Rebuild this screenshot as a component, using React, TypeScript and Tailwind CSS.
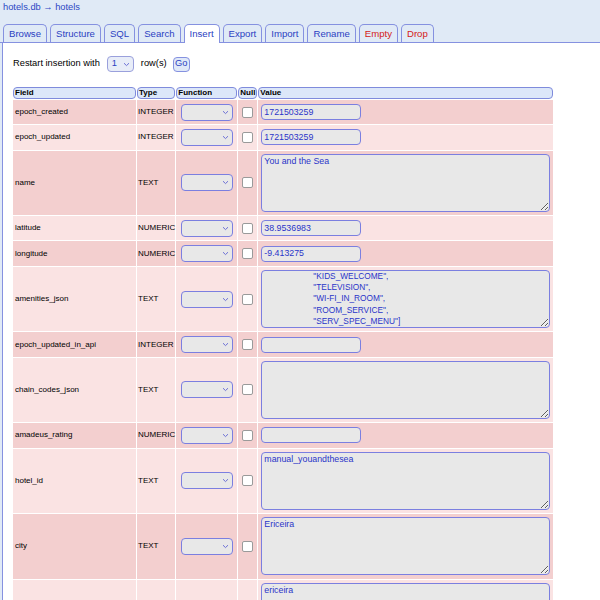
import React from "react";

type Row = { f: string; t: string; v: string; kind: "input" | "area"; indent?: boolean };

const rows: Row[] = [
  { f: "epoch_created", t: "INTEGER", v: "1721503259", kind: "input" },
  { f: "epoch_updated", t: "INTEGER", v: "1721503259", kind: "input" },
  { f: "name", t: "TEXT", v: "You and the Sea", kind: "area" },
  { f: "latitude", t: "NUMERIC", v: "38.9536983", kind: "input" },
  { f: "longitude", t: "NUMERIC", v: "-9.413275", kind: "input" },
  {
    f: "amenities_json",
    t: "TEXT",
    v: '"KIDS_WELCOME",\n"TELEVISION",\n"WI-FI_IN_ROOM",\n"ROOM_SERVICE",\n"SERV_SPEC_MENU"]',
    kind: "area",
    indent: true,
  },
  { f: "epoch_updated_in_api", t: "INTEGER", v: "", kind: "input" },
  { f: "chain_codes_json", t: "TEXT", v: "", kind: "area" },
  { f: "amadeus_rating", t: "NUMERIC", v: "", kind: "input" },
  { f: "hotel_id", t: "TEXT", v: "manual_youandthesea", kind: "area" },
  { f: "city", t: "TEXT", v: "Ericeira", kind: "area" },
  { f: "", t: "", v: "ericeira", kind: "area" },
];

const tabs: { label: string; active?: boolean; red?: boolean }[] = [
  { label: "Browse" },
  { label: "Structure" },
  { label: "SQL" },
  { label: "Search" },
  { label: "Insert", active: true },
  { label: "Export" },
  { label: "Import" },
  { label: "Rename" },
  { label: "Empty", red: true },
  { label: "Drop", red: true },
];

function Chevron() {
  return (
    <svg width="7" height="5" viewBox="0 0 7 5" className="shrink-0">
      <path d="M1 1.2 L3.5 3.6 L6 1.2" fill="none" stroke="#6b6fd6" strokeWidth="1" />
    </svg>
  );
}

function FnSelect() {
  return (
    <div className="mx-auto flex h-[17px] w-[52px] items-center justify-end rounded-[4px] border-[1.5px] border-[#7b7fe0] bg-[#e8e8e8] pr-[3px]">
      <Chevron />
    </div>
  );
}

function Checkbox() {
  return <div className="mx-auto h-[11px] w-[11px] rounded-[2px] border border-[#9a9a9a] bg-white" />;
}

export default function App() {
  return (
    <div
      className="h-[600px] w-[600px] overflow-hidden bg-[#e0eaf6] text-black"
      style={{ fontFamily: '"Liberation Sans", Arial, sans-serif' }}
    >
      <div className="h-[24px] pl-[3px] pt-[1px] text-[9.3px] leading-[13px] text-[#2d47c4]">
        hotels.db → hotels
      </div>
      <div className="flex items-end gap-[3px] border-b border-[#8591e0] pl-[3px]">
        {tabs.map((t) => (
          <div
            key={t.label}
            className={
              "flex items-center rounded-t-[5px] border border-b-0 border-[#8591e0] px-[5px] pt-[1px] text-[9.6px] " +
              (t.active ? "mb-[-1px] h-[19px] bg-white pb-[1px]" : "h-[18px] bg-[#e0eaf6]") +
              (t.red ? " text-[#d42020]" : " text-[#2b3fc2]")
            }
          >
            {t.label}
          </div>
        ))}
      </div>
      <div className="ml-[2px] h-[560px] border-l border-[#8591e0] bg-white pl-[9px] pt-[13px]">
        <div className="flex h-[16px] items-center text-[9.3px]">
          <span className="ml-[1px]">Restart insertion with</span>
          <div className="ml-[7px] flex h-[16px] w-[27px] items-center justify-between rounded-[4px] border-[1.5px] border-[#9aa0dc] bg-[#e8edf8] pl-[4px] pr-[3px] text-[9.3px] text-[#2b3fc2]">
            <span>1</span>
            <Chevron />
          </div>
          <span className="ml-[7px]">row(s)</span>
          <div className="ml-[6px] flex h-[15px] w-[17px] items-center justify-center rounded-[4px] border-[1.5px] border-[#8591e0] bg-[#dfe8f8] text-[9.3px] text-[#2b3fc2]">
            Go
          </div>
        </div>
        <table className="mt-[14px] table-fixed border-separate border-spacing-[1px] text-[8px]">
          <colgroup>
            <col className="w-[123px]" />
            <col className="w-[38px]" />
            <col className="w-[61px]" />
            <col className="w-[19px]" />
            <col className="w-[295px]" />
          </colgroup>
          <thead>
            <tr>
              {["Field", "Type", "Function", "Null", "Value"].map((h) => (
                <th
                  key={h}
                  className="h-[12px] rounded-[4px] border border-[#7f8bdc] bg-[#dce7f9] p-0 pl-[1px] text-left text-[8px] font-bold leading-[10px]"
                >
                  {h}
                </th>
              ))}
            </tr>
          </thead>
          <tbody>
            {rows.map((r, i) => {
              const bg = i % 2 === 0 ? "bg-[#f3cfcf]" : "bg-[#fae3e3]";
              const h = r.kind === "area" ? "h-[64.6px]" : "h-[24.3px]";
              return (
                <tr key={i}>
                  <td className={`${bg} ${h} p-0 pl-[2px] align-middle`}>{r.f}</td>
                  <td className={`${bg} p-0 pl-[1px] align-middle`}>{r.t}</td>
                  <td className={`${bg} p-0 align-middle`}>
                    <FnSelect />
                  </td>
                  <td className={`${bg} p-0 align-middle`}>
                    <Checkbox />
                  </td>
                  <td className={`${bg} p-0 pl-[3px] align-middle`}>
                    {r.kind === "input" ? (
                      <div className="flex h-[16px] w-[100px] items-center rounded-[4px] border-[1.5px] border-[#7b7fe0] bg-[#e8e8e8] pl-[2px] text-[8.8px] text-[#2a35c8]">
                        {r.v}
                      </div>
                    ) : (
                      <textarea
                        readOnly
                        spellCheck={false}
                        defaultValue={r.v}
                        className={
                          "block h-[58px] w-[289px] rounded-[4px] border-[1.5px] border-[#7b7fe0] bg-[#e8e8e8] pr-[2px] text-[#2a35c8] outline-none " +
                          (r.indent
                            ? "pl-[51px] pt-0 text-[8.3px] leading-[11.2px]"
                            : "pl-[2px] pt-[1px] text-[8.8px] leading-[11px]")
                        }
                        style={{ fontFamily: '"Liberation Sans", Arial, sans-serif' }}
                      />
                    )}
                  </td>
                </tr>
              );
            })}
          </tbody>
        </table>
      </div>
    </div>
  );
}
